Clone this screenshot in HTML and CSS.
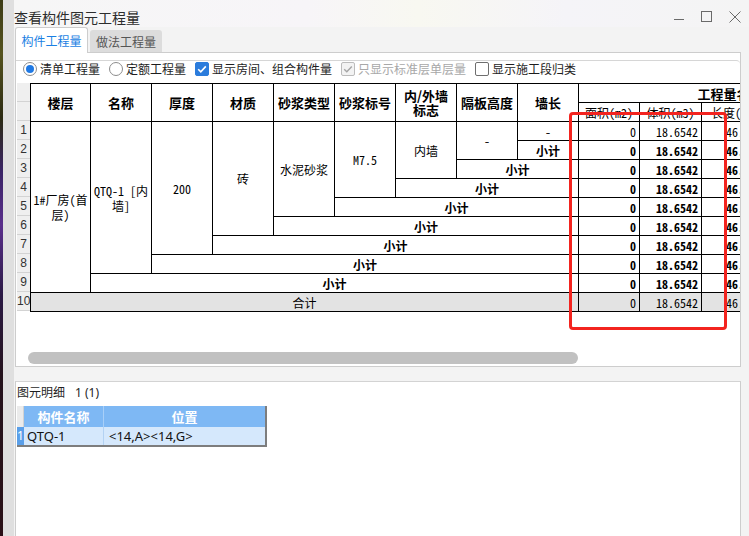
FILE: index.html
```html
<!DOCTYPE html>
<html lang="zh-CN">
<head>
<meta charset="utf-8">
<title>查看构件图元工程量</title>
<link rel="stylesheet" href="styles.css">
</head>
<body>
<div class="edge"></div>
<div class="window">
  <div class="titlebar">
    <span class="title">查看构件图元工程量</span>
    <div class="controls">
      <span class="ctl"><svg width="12" height="12" viewBox="0 0 12 12"><path d="M1 8.5H11" stroke="#6a6a6a" stroke-width="1" fill="none"/></svg></span>
      <span class="ctl"><svg width="12" height="12" viewBox="0 0 12 12"><rect x="0.5" y="0.5" width="10" height="10" stroke="#6a6a6a" stroke-width="1" fill="none"/></svg></span>
      <span class="ctl"><svg width="12" height="12" viewBox="0 0 12 12"><path d="M0.5 0.5L11.5 11.5M11.5 0.5L0.5 11.5" stroke="#6a6a6a" stroke-width="1" fill="none"/></svg></span>
    </div>
  </div>
  <div class="frame">
    <div class="tabs">
      <div class="tab active">构件工程量</div>
      <div class="tab">做法工程量</div>
    </div>
    <div class="page">
      <div class="group">
        <div class="options">
          <label class="opt"><span class="radio on"></span>清单工程量</label>
          <label class="opt"><span class="radio"></span>定额工程量</label>
          <label class="opt"><span class="check on"><svg width="12" height="12" viewBox="0 0 12 12"><path d="M2.2 6.2L4.8 8.8L9.8 3.4" stroke="#fff" stroke-width="1.6" fill="none"/></svg></span>显示房间、组合构件量</label>
          <label class="opt dis"><span class="check dis"><svg width="12" height="12" viewBox="0 0 12 12"><path d="M2.2 6.2L4.8 8.8L9.8 3.4" stroke="#a5a5a5" stroke-width="1.4" fill="none"/></svg></span>只显示标准层单层量</label>
          <label class="opt"><span class="check"></span>显示施工段归类</label>
        </div>
      </div>
      <div class="grid">
        <div class="tablearea">
          <div class="rowhead">
            <div class="rh"></div><div class="rh"></div>
            <div class="rh">1</div><div class="rh">2</div><div class="rh">3</div><div class="rh">4</div><div class="rh">5</div>
            <div class="rh">6</div><div class="rh">7</div><div class="rh">8</div><div class="rh">9</div><div class="rh">10</div>
          </div>
          <div class="clip">
            <table class="qty">
              <colgroup>
                <col class="w60"><col class="w61"><col class="w61"><col class="w61"><col class="w61"><col class="w61"><col class="w61"><col class="w61"><col class="w61">
                <col class="w61"><col class="w62"><col class="w70"><col class="w55"><col class="w55">
              </colgroup>
              <thead>
                <tr>
                  <th rowspan="2">楼层</th><th rowspan="2">名称</th><th rowspan="2">厚度</th><th rowspan="2">材质</th><th rowspan="2">砂浆类型</th><th rowspan="2">砂浆标号</th><th rowspan="2" class="two">内/外墙<br>标志</th><th rowspan="2">隔板高度</th><th rowspan="2">墙长</th>
                  <th colspan="5">工程量名称</th>
                </tr>
                <tr class="sub">
                  <th>面积(m2)</th><th>体积(m3)</th><th class="len">长度(m)</th><th></th><th></th>
                </tr>
              </thead>
              <tbody>
                <tr>
                  <td rowspan="9">1#厂房(首<br>层)</td><td rowspan="8">QTQ-1 [内<br>墙]</td><td rowspan="7">200</td><td rowspan="6">砖</td><td rowspan="5">水泥砂浆</td><td rowspan="4">M7.5</td><td rowspan="3">内墙</td><td rowspan="2">-</td><td>-</td>
                  <td class="n">0</td><td class="n">18.6542</td><td class="n">46.6355</td><td></td><td></td>
                </tr>
                <tr class="b"><td class="st">小计</td><td class="n">0</td><td class="n">18.6542</td><td class="n">46.6355</td><td></td><td></td></tr>
                <tr class="b"><td class="st" colspan="2">小计</td><td class="n">0</td><td class="n">18.6542</td><td class="n">46.6355</td><td></td><td></td></tr>
                <tr class="b"><td class="st" colspan="3">小计</td><td class="n">0</td><td class="n">18.6542</td><td class="n">46.6355</td><td></td><td></td></tr>
                <tr class="b"><td class="st" colspan="4">小计</td><td class="n">0</td><td class="n">18.6542</td><td class="n">46.6355</td><td></td><td></td></tr>
                <tr class="b"><td class="st" colspan="5">小计</td><td class="n">0</td><td class="n">18.6542</td><td class="n">46.6355</td><td></td><td></td></tr>
                <tr class="b"><td class="st" colspan="6">小计</td><td class="n">0</td><td class="n">18.6542</td><td class="n">46.6355</td><td></td><td></td></tr>
                <tr class="b"><td class="st" colspan="7">小计</td><td class="n">0</td><td class="n">18.6542</td><td class="n">46.6355</td><td></td><td></td></tr>
                <tr class="b"><td class="st" colspan="8">小计</td><td class="n">0</td><td class="n">18.6542</td><td class="n">46.6355</td><td></td><td></td></tr>
                <tr class="total"><td colspan="9">合计</td><td class="n">0</td><td class="n">18.6542</td><td class="n">46.6355</td><td></td><td></td></tr>
              </tbody>
            </table>
          </div>
        </div>
        <div class="hscroll"><div class="thumb"></div></div>
      </div>
    </div>
    <div class="splitter"></div>
    <div class="detail">
      <div class="detail-title">图元明细<span class="count">1 (1)</span></div>
      <div class="mini">
        <div class="m-corner"></div><div class="m-h">构件名称</div><div class="m-h last">位置</div>
        <div class="m-rh">1</div><div class="m-c">QTQ-1</div><div class="m-c pos last">&lt;14,A&gt;&lt;14,G&gt;</div>
      </div>
    </div>
  </div>
</div>
<div class="highlight"></div>
</body>
</html>
```

FILE: styles.css
```css
* { box-sizing: border-box; }
html, body { margin: 0; padding: 0; }
body {
  width: 749px;
  height: 536px;
  overflow: hidden;
  display: flex;
  position: relative;
  background: #efefef;
  font-family: "Noto Sans CJK SC", sans-serif;
  color: #222;
}
.edge {
  width: 3px;
  flex: none;
  background: linear-gradient(#3c3b16 0%, #55531f 10%, #2b2a12 22%, #3a2466 32%, #5a2f8c 42%, #2b1a45 55%, #24121c 70%, #2a1017 100%);
}
.window {
  width: 746px;
  flex: none;
  border-left: 11px solid #dfdfdf;
  background: #f3f3f3;
  display: flex;
  flex-direction: column;
}
.titlebar {
  height: 27px;
  flex: none;
  display: flex;
  align-items: center;
  padding-top: 7px;
  background: linear-gradient(90deg, #f6f6f6 0%, #f7f5f8 40%, #f8f8f1 55%, #f5f4f8 75%, #f4f4f4 100%);
}
.title { font-size: 14px; line-height: 16px; color: #2d2d2d; }
.controls { margin-left: auto; display: flex; }
.ctl { width: 28px; height: 20px; display: flex; align-items: center; justify-content: center; }

.frame {
  flex: 1;
  display: flex;
  flex-direction: column;
  padding-left: 1px;
  padding-right: 8px;
}
.tabs {
  height: 25px;
  flex: none;
  display: flex;
  align-items: flex-end;
  gap: 2px;
  position: relative;
  z-index: 1;
}
.tab {
  width: 72px;
  height: 22px;
  display: flex;
  align-items: center;
  justify-content: center;
  font-size: 12px;
  color: #555;
  background: #dcdcdc;
  border-radius: 3px 3px 0 0;
}
.tab.active {
  width: 73px;
  height: 26px;
  margin-bottom: -1px;
  padding-bottom: 1px;
  background: #fff;
  color: #1b7fe3;
  border: 1px solid #cdcdcd;
  border-bottom: none;
}

.page {
  height: 315px;
  flex: none;
  background: #fff;
  border: 1px solid #cdcdcd;
  padding-left: 1px;
  display: flex;
  flex-direction: column;
}
.group {
  margin-top: 7px;
  margin-left: -1px;
  border-top: 1px solid #d6d6d6;
  border-top-right-radius: 4px;
  padding-bottom: 7px;
}
.options {
  height: 15px;
  display: flex;
  align-items: center;
  gap: 9px;
  padding-left: 7px;
}
.opt {
  display: flex;
  align-items: center;
  gap: 3px;
  font-size: 12px;
  line-height: 15px;
  color: #1e1e1e;
  white-space: nowrap;
}
.opt.dis { color: #a8a8a8; }
.radio {
  width: 14px;
  height: 14px;
  border: 1px solid #8c8c8c;
  border-radius: 50%;
  background: #fff;
  display: flex;
  align-items: center;
  justify-content: center;
}
.radio.on::after {
  content: "";
  width: 8px;
  height: 8px;
  border-radius: 50%;
  background: #1f79e4;
}
.check {
  width: 14px;
  height: 14px;
  border: 1px solid #6e6e6e;
  border-radius: 2px;
  background: #fff;
  display: flex;
  align-items: center;
  justify-content: center;
}
.check.on { background: #2b7cdc; border-color: #2b7cdc; }
.check.dis { background: #f3f3f3; border-color: #bcbcbc; }

.grid { flex: 1; display: flex; flex-direction: column; }
.tablearea {
  height: 269px;
  display: flex;
  overflow: hidden;
}
.rowhead { width: 13px; flex: none; }
.rh {
  height: 19px;
  background: #efefef;
  border-bottom: 1px solid #d3d3d3;
  font-family: "Liberation Sans", sans-serif;
  font-size: 12px;
  line-height: 18px;
  text-align: center;
  color: #333;
  overflow: hidden;
  white-space: nowrap;
}
.clip { flex: 1; overflow: hidden; }

.qty {
  table-layout: fixed;
  border-collapse: collapse;
  width: 847px;
  font-family: "Noto Sans Mono CJK SC", "Noto Sans CJK SC", monospace;
  font-size: 12px;
  color: #000;
}
.w55 { width: 55px; }
.w60 { width: 60px; }
.w61 { width: 61px; }
.w62 { width: 62px; }
.w70 { width: 70px; }
.qty tr { height: 19px; }
.qty th, .qty td {
  border: 1px solid #000;
  padding: 0 2px;
  white-space: nowrap;
  overflow: hidden;
  text-align: center;
}
.qty th {
  font-family: "Noto Sans CJK SC", sans-serif;
  font-weight: bold;
  font-size: 13px;
  line-height: 13px;
}
.qty th.two { line-height: 14px; }
.qty tr.sub th {
  font-weight: normal;
  font-size: 12px;
  font-family: "Noto Sans Mono CJK SC", "Noto Sans CJK SC", monospace;
}
.qty tr.sub th.len { text-align: left; padding-left: 9px; }
.qty td { line-height: 15px; }
.qty td.n { text-align: right; padding-right: 3px; }
.qty tr.b td { font-weight: bold; }
.qty tr.total td { background: #e3e3e3; }

.hscroll { height: 13px; padding-left: 11px; }
.thumb { width: 550px; height: 12px; background: #c1c1c1; border-radius: 6px; }

.splitter { height: 14px; flex: none; }
.detail {
  flex: 1;
  background: #fff;
  border-top: 1px solid #d3d3d3;
  border-left: 1px solid #cdcdcd;
  border-right: 1px solid #cdcdcd;
  padding-left: 1px;
}
.detail-title {
  height: 20px;
  line-height: 20px;
  font-size: 12px;
  color: #1e1e1e;
}
.count { margin-left: 10px; font-family: "Noto Sans", sans-serif; }
.mini {
  margin-top: 4px;
  width: 250px;
  display: grid;
  grid-template-columns: 7px 80px 161px;
  grid-template-rows: 21px 18px;
  border-right: 2px solid #7d7d7d;
  border-bottom: 2px solid #7d7d7d;
}
.m-corner { background: #ebebeb; border-right: 1px solid #d2d2d2; }
.m-h {
  background: #7eb8f4;
  color: #fff;
  font-weight: bold;
  font-size: 13px;
  line-height: 21px;
  text-align: center;
  border-right: 1px solid #a8cff8;
}
.m-rh {
  background: #5a9fe9;
  color: #fff;
  font-family: "Noto Sans", sans-serif;
  font-size: 12px;
  line-height: 18px;
  overflow: hidden;
}
.m-c {
  background: #d5e8fc;
  border-right: 1px solid #b3d2f3;
  font-family: "Noto Sans", "Noto Sans CJK SC", sans-serif;
  font-size: 13px;
  line-height: 18px;
  color: #111;
  padding-left: 3px;
  white-space: nowrap;
}
.m-c.pos { padding-left: 5px; }
.last { border-right: none; }

.highlight {
  position: absolute;
  left: 569px;
  top: 112px;
  width: 158px;
  height: 218px;
  border: 3px solid #f3241f;
  border-radius: 4px;
  pointer-events: none;
}
```
